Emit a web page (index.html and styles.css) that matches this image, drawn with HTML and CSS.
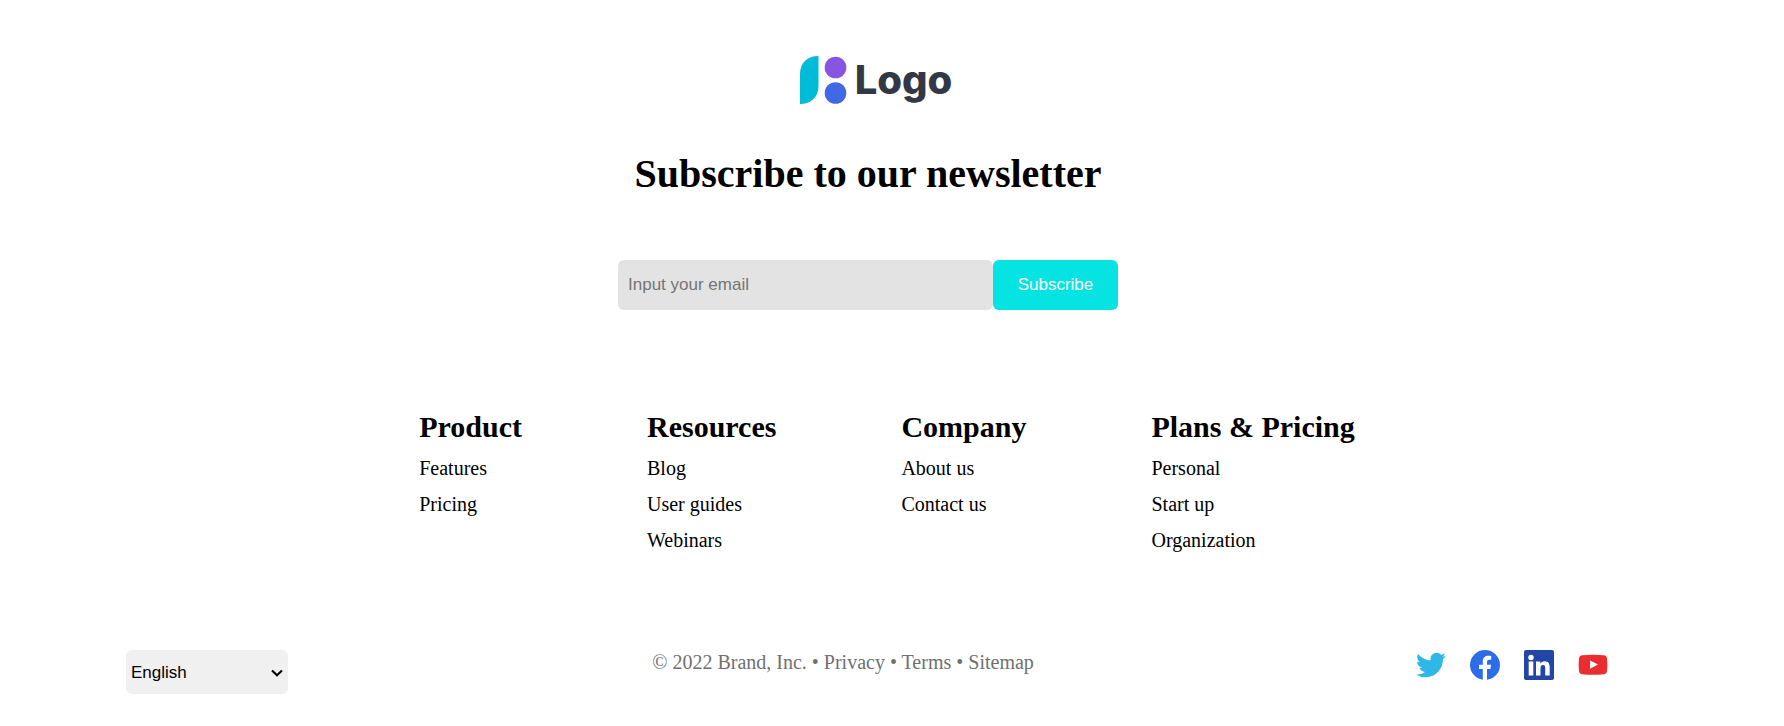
FILE: index.html
```
<!DOCTYPE html>
<html lang="en">
<head>
<meta charset="utf-8">
<meta name="viewport" content="width=device-width, initial-scale=1">
<title>Brand</title>
<link rel="stylesheet" href="styles.css">
</head>
<body>
<footer class="footer">
  <section class="newsletter">
    <a class="logo" href="#" aria-label="Logo">
      <svg class="logo-mark" viewBox="0 0 47 48" aria-hidden="true">
        <path fill="#00bcd6" d="M0 48V18C0 7 7 0 18.500 0V30C18.500 41 11 48 0 48Z"/>
        <circle cx="35.500" cy="11.500" r="10.800" fill="#8855e0"/>
        <circle cx="35.500" cy="37" r="10.800" fill="#4169e6"/>
      </svg>
      <span class="logo-text">Logo</span>
    </a>
    <h1 class="title">Subscribe to our newsletter</h1>
    <form class="form">
      <input class="email" type="email" placeholder="Input your email" aria-label="Email">
      <button class="subscribe" type="button">Subscribe</button>
    </form>
  </section>
  <nav class="links" aria-label="Footer">
    <div class="column">
      <h2 class="column-title">Product</h2>
      <a href="#">Features</a>
      <a href="#">Pricing</a>
    </div>
    <div class="column">
      <h2 class="column-title">Resources</h2>
      <a href="#">Blog</a>
      <a href="#">User guides</a>
      <a href="#">Webinars</a>
    </div>
    <div class="column">
      <h2 class="column-title">Company</h2>
      <a href="#">About us</a>
      <a href="#">Contact us</a>
    </div>
    <div class="column">
      <h2 class="column-title">Plans &amp; Pricing</h2>
      <a href="#">Personal</a>
      <a href="#">Start up</a>
      <a href="#">Organization</a>
    </div>
  </nav>
  <div class="bottom">
    <div class="language">
      <select class="language-select" aria-label="Language">
        <option>English</option>
      </select>
      <svg class="chevron" viewBox="0 0 12 8" aria-hidden="true"><path d="M1 1.500L6 6.200L11 1.500" fill="none" stroke="#000" stroke-width="2.200"/></svg>
    </div>
    <p class="legal">© 2022 Brand, Inc. • <a href="#">Privacy</a> • <a href="#">Terms</a> • <a href="#">Sitemap</a></p>
    <div class="social">
      <a href="#" aria-label="Twitter"><svg viewBox="0 0 24 24"><path fill="#2eb8e8" d="M23.953 4.570a10 10 0 0 1-2.825.775 4.958 4.958 0 0 0 2.163-2.723c-.951.555-2.005.959-3.127 1.184a4.920 4.920 0 0 0-8.384 4.482C7.690 8.095 4.067 6.130 1.640 3.162a4.822 4.822 0 0 0-.666 2.475c0 1.710.870 3.213 2.188 4.096a4.904 4.904 0 0 1-2.228-.616v.060a4.923 4.923 0 0 0 3.946 4.827 4.996 4.996 0 0 1-2.212.085 4.936 4.936 0 0 0 4.604 3.417 9.867 9.867 0 0 1-6.102 2.105c-.390 0-.779-.023-1.170-.067a13.995 13.995 0 0 0 7.557 2.209c9.053 0 13.998-7.496 13.998-13.985 0-.210 0-.420-.015-.630A9.935 9.935 0 0 0 24 4.590z"/></svg></a>
      <a href="#" aria-label="Facebook"><svg viewBox="0 0 30 30"><circle cx="15" cy="15" r="15" fill="#2b6de8"/><path fill="#fff" d="M12.800 30V19H9V14.700H12.800V11.500C12.800 7.700 15 5.800 18.400 5.800C20 5.800 21.200 6 21.200 6V9.700H19.300C17.400 9.700 17 10.800 17 12V14.700H21L20.400 19H17V30Z"/></svg></a>
      <a href="#" aria-label="LinkedIn"><svg viewBox="0 0 30 30"><rect width="30" height="30" rx="2" fill="#2146a5"/><circle cx="7" cy="7.500" r="2.700" fill="#fff"/><path fill="#fff" d="M4.700 11.500H9.300V25.500H4.700ZM12 11.500H16.300V13.500C17 12.200 18.600 11.200 20.700 11.200C24.800 11.200 25.700 14 25.700 17.600V25.500H21.200V18.500C21.200 16.800 21.100 15 19 15C17 15 16.500 16.600 16.500 18.400V25.500H12Z"/></svg></a>
      <a href="#" aria-label="YouTube"><svg viewBox="0 0 30 30"><path fill="#e92d30" d="M4 5.200Q15 4.200 26 5.200Q28.600 5.400 29 8.200Q29.800 14.600 29 21Q28.600 24 26 24.200Q15 25.200 4 24.200Q1.400 24 1 21Q.200 14.600 1 8.200Q1.400 5.400 4 5.200Z"/><path fill="#fff" d="M12 10.500L20 14.600L12 18.800Z"/></svg></a>
    </div>
  </div>
</footer>
</body>
</html>
```
FILE: styles.css
```
* {
  box-sizing: border-box;
}

body {
  margin: 0;
  background: #fff;
  color: #000;
  font-family: "Liberation Serif", "Times New Roman", serif;
  font-size: 20px;
  line-height: 24px;
}

a {
  color: inherit;
  text-decoration: none;
}

.footer {
  padding: 56px 0 32px;
}

.newsletter {
  display: flex;
  flex-direction: column;
  align-items: center;
  padding-right: 48px;
}

.logo {
  display: flex;
  align-items: center;
  gap: 8px;
  margin-left: 16px;
}

.logo-mark {
  width: 47px;
  height: 48px;
}

.logo-text {
  color: #323844;
  font-family: Inter, sans-serif;
  font-size: 40px;
  font-weight: 800;
  line-height: 48px;
}

.title {
  margin: 46px 0 62px;
  font-size: 40px;
  line-height: 48px;
}

.form {
  display: flex;
  width: 500px;
  max-width: 100%;
}

.email,
.subscribe {
  height: 50px;
  border: 0;
  border-radius: 6px;
  font-family: "Liberation Sans", Arial, sans-serif;
  font-size: 17px;
}

.email {
  flex: 1;
  min-width: 0;
  padding: 0 10px;
  background: #e3e3e3;
}

.email::placeholder {
  color: #757575;
}

.subscribe {
  width: 125px;
  padding: 0;
  background: #05e3e3;
  color: #fff;
}

.links {
  display: flex;
  justify-content: center;
  gap: 125px;
  padding: 100px 10px 0 0;
}

.column {
  display: flex;
  flex-direction: column;
  gap: 12px;
}

.column-title {
  margin: 0;
  font-size: 30px;
  line-height: 34px;
}

.bottom {
  display: flex;
  justify-content: space-between;
  align-items: flex-start;
  padding: 98px 176px 0 126px;
}

.language {
  position: relative;
}

.language-select {
  width: 162px;
  height: 44px;
  padding: 0 5px;
  border: 0;
  border-radius: 6px;
  background: #f0f0f0;
  appearance: none;
  color: #000;
  font-family: "Liberation Sans", Arial, sans-serif;
  font-size: 17px;
}

.chevron {
  position: absolute;
  top: 19px;
  right: 5px;
  width: 12px;
  height: 8px;
  pointer-events: none;
}

.legal {
  margin: 0;
  color: #707070;
}

.social {
  display: flex;
  gap: 24px;
  padding-left: 18px;
}

.social svg {
  display: block;
  width: 30px;
  height: 30px;
}
```
